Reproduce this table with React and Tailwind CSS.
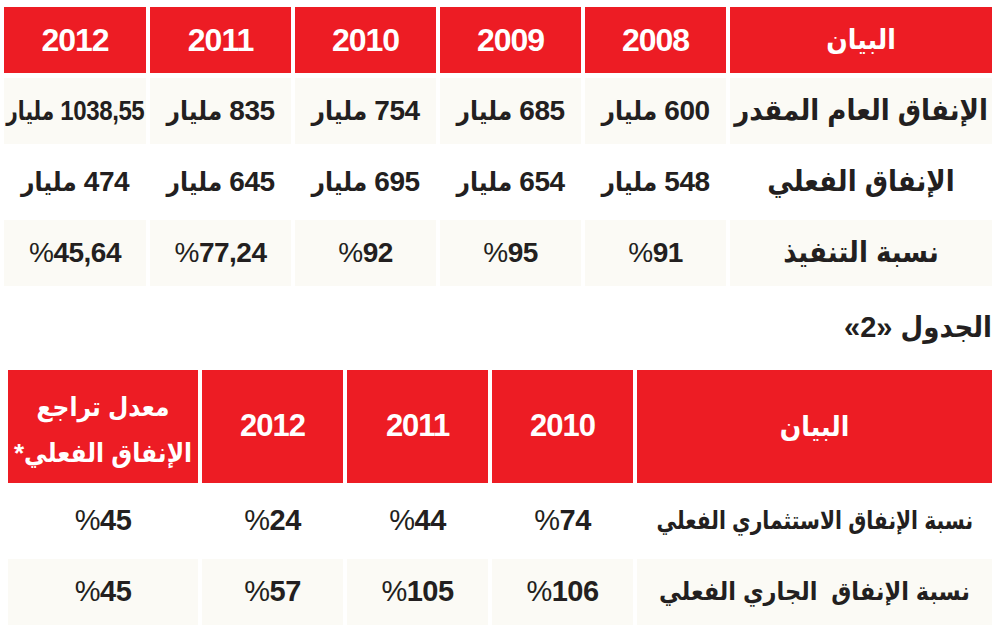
import React from 'react';

const table1Head = ['البيان', '2008', '2009', '2010', '2011', '2012'];
const table1Rows = [
  ['الإنفاق العام المقدر', '600 مليار', '685 مليار', '754 مليار', '835 مليار', '1038,55 مليار'],
  ['الإنفاق الفعلي', '548 مليار', '654 مليار', '695 مليار', '645 مليار', '474 مليار'],
  ['نسبة التنفيذ', '%91', '%95', '%92', '%77,24', '%45,64'],
];

const table2Head = ['البيان', '2010', '2011', '2012'];
const table2Rows = [
  ['نسبة الإنفاق الاستثماري الفعلي', '%74', '%44', '%24', '%45'],
  ['نسبة الإنفاق  الجاري الفعلي', '%106', '%105', '%57', '%45'],
];

// the % sign is set lighter than the digits in the print
const Value = ({ text }) => {
  if (text.startsWith('%')) {
    return (
      <span className="tracking-[-0.5px]">
        <span className="font-normal">%</span>
        {text.slice(1)}
      </span>
    );
  }
  if (text.endsWith('مليار')) {
    const num = text.replace(' مليار', '');
    return (
      <span className={`flex items-center gap-[7px] ${num.length > 4 ? 'scale-x-[0.86]' : ''}`}>
        <span className="tracking-[-0.5px]">{num}</span>
        <span className="text-[26px]">مليار</span>
      </span>
    );
  }
  return <span>{text}</span>;
};

const HeadCell = ({ children, className = '' }) => (
  <div className={`bg-[#ed1c24] text-white flex items-center justify-center text-center font-bold ${className}`}>
    {children}
  </div>
);

export default function App() {
  return (
    <div
      dir="rtl"
      className="w-[997px] h-[633px] bg-white text-[#231f20] font-['Liberation_Sans','DejaVu_Sans_Condensed','DejaVu_Sans',sans-serif] overflow-hidden"
    >
      {/* Table 1 */}
      <div className="pt-[7px] pr-[5px] grid grid-cols-[262px_141px_141px_141px_141px_142px] gap-x-[4px] gap-y-[5px]">
        {table1Head.map((h, i) => (
          <HeadCell key={h} className={`h-[66px] ${i === 0 ? 'text-[28px]' : 'text-[32px] tracking-[-1px]'}`}>
            {h}
          </HeadCell>
        ))}
        {table1Rows.map((row, r) =>
          row.map((cell, c) => (
            <div
              key={`${r}-${c}`}
              className={`h-[66px] flex items-center justify-center font-bold whitespace-nowrap ${
                r === 1 ? 'bg-white' : 'bg-[#fbfaf5]'
              } ${c === 0 ? 'text-[29px]' : 'text-[28px]'}`}
            >
              <Value text={cell} />
            </div>
          ))
        )}
      </div>

      {/* Title */}
      <div className="h-[84px] pr-[5px] flex items-center">
        <h2 className="text-[29px] font-bold">الجدول «2»</h2>
      </div>

      {/* Table 2 */}
      <div className="pr-[5px] grid grid-cols-[355px_141px_141px_141px_190px] gap-x-[4px] gap-y-[5px]">
        {table2Head.map((h, i) => (
          <HeadCell key={h} className={`h-[113px] ${i === 0 ? 'text-[28px]' : 'text-[31px] tracking-[-1px]'}`}>
            {h}
          </HeadCell>
        ))}
        <HeadCell className="h-[113px] pt-[6px] text-[26px] leading-[46px] flex-col">
          <span>معدل تراجع</span>
          <span>الإنفاق الفعلي*</span>
        </HeadCell>
        {table2Rows.map((row, r) =>
          row.map((cell, c) => (
            <div
              key={`${r}-${c}`}
              className={`h-[66px] flex items-center justify-center font-bold whitespace-pre ${
                r === 0 ? 'bg-white' : 'bg-[#fbfaf5]'
              } ${c === 0 ? 'text-[25px]' : 'text-[29px]'}`}
            >
              {c === 0 && r === 0 ? (
                <span className="scale-x-[0.9]">{cell}</span>
              ) : (
                <Value text={cell} />
              )}
            </div>
          ))
        )}
      </div>
    </div>
  );
}
